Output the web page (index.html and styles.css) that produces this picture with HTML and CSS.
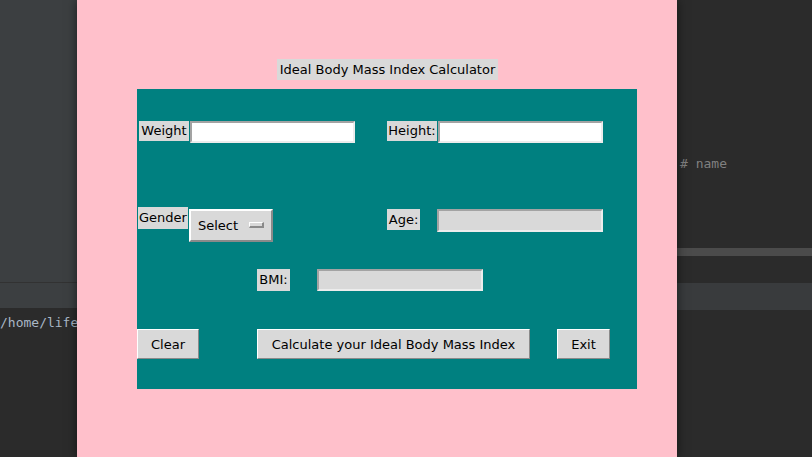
FILE: index.html
```html
<!DOCTYPE html>
<html>
<head>
<meta charset="utf-8">
<link rel="stylesheet" href="styles.css">
</head>
<body>
<div class="desk">
  <div class="pane pane-left">
    <div class="lp-top"></div>
    <div class="lp-tab"></div>
    <div class="lp-term"><span class="term-text">/home/life</span></div>
  </div>
  <div class="window">
    <div class="title-row"><span class="lbl title">Ideal Body Mass Index Calculator</span></div>
    <div class="frame">
      <div class="row row1">
        <span class="lbl w50 weight-lbl">Weight</span>
        <span class="entry white"></span>
        <span class="lbl w50 height-lbl">Height:</span>
        <span class="entry white"></span>
      </div>
      <div class="row row2">
        <span class="lbl w50 gender-lbl">Gender</span>
        <span class="option">Select<span class="indicator"></span></span>
        <span class="lbl w33 age-lbl">Age:</span>
        <span class="entry gray age-entry"></span>
      </div>
      <div class="row row3">
        <span class="lbl w33 bmi-lbl">BMI:</span>
        <span class="entry gray bmi-entry"></span>
      </div>
      <div class="row row4">
        <span class="btn btn-clear">Clear</span>
        <span class="btn btn-calc">Calculate your Ideal Body Mass Index</span>
        <span class="btn btn-exit">Exit</span>
      </div>
    </div>
  </div>
  <div class="pane pane-right">
    <div class="rp-top"><span class="comment"># name</span></div>
    <div class="rp-bar"></div>
    <div class="rp-gap"></div>
    <div class="rp-tab"></div>
    <div class="rp-rest"></div>
  </div>
</div>
</body>
</html>
```
FILE: styles.css
```css
html, body {
  margin: 0;
  padding: 0;
  width: 812px;
  height: 457px;
  overflow: hidden;
  background: #2b2b2b;
}
.desk {
  display: flex;
  width: 812px;
  height: 457px;
}
.pane {
  display: flex;
  flex-direction: column;
  overflow: hidden;
}
.pane-left {
  width: 77px;
  flex: none;
}
.lp-top {
  height: 282px;
  background: #3c3f41;
  border-bottom: 1px solid #323232;
}
.lp-tab {
  height: 25px;
  background: #3c3f41;
}
.lp-term {
  flex: 1;
  background: #2b2b2b;
  padding-top: 7px;
}
.term-text {
  display: block;
  white-space: nowrap;
  margin-left: 0;
  font-family: "DejaVu Sans Mono", monospace;
  font-size: 13px;
  line-height: 16px;
  color: #a9b7c6;
}
.pane-right {
  flex: 1;
}
.rp-top {
  height: 248px;
  background: #2b2b2b;
  padding-top: 156px;
  box-sizing: border-box;
}
.comment {
  display: block;
  margin-left: 3px;
  font-family: "DejaVu Sans Mono", monospace;
  font-size: 13px;
  line-height: 16px;
  color: #808080;
}
.rp-bar {
  height: 8px;
  background: #4b4b4b;
}
.rp-gap {
  height: 27px;
  background: #2b2b2b;
}
.rp-tab {
  height: 27px;
  background: #393b3d;
}
.rp-rest {
  flex: 1;
  background: #2b2b2b;
}
.window {
  width: 600px;
  flex: none;
  background: #ffc0cb;
  position: relative;
  z-index: 2;
  box-shadow: 0 0 10px rgba(0,0,0,0.55);
  padding-top: 59px;
  box-sizing: border-box;
  font-family: "DejaVu Sans", sans-serif;
  font-size: 13px;
  color: #000;
}
.title-row {
  display: flex;
  padding-left: 200px;
}
.lbl {
  display: block;
  background: #d9d9d9;
  height: 21px;
  line-height: 21px;
  text-align: center;
  white-space: nowrap;
  box-sizing: border-box;
}
.title {
  width: 221px;
}
.frame {
  margin-top: 9px;
  margin-left: 60px;
  width: 500px;
  height: 300px;
  background: #008080;
  display: flex;
  flex-direction: column;
}
.row {
  display: flex;
  align-items: flex-start;
}
.row1 { margin-top: 32px; }
.row2 { margin-top: 66px; }
.row3 { margin-top: 27px; }
.row4 { margin-top: 38px; }
.w50 { width: 50px; }
.w33 { width: 33px; }
.weight-lbl { margin-left: 2px; margin-right: 1px; height: 20px; line-height: 20px; }
.height-lbl { margin-left: 32px; margin-right: 1px; height: 20px; line-height: 20px; }
.entry {
  display: block;
  width: 165px;
  height: 22px;
  box-sizing: border-box;
  border-style: solid;
  border-width: 2px;
  border-color: #a3a3a3 #ececec #ececec #a3a3a3;
}
.white { background: #fff; }
.gray { background: #d9d9d9; }
.gender-lbl { margin-left: 1px; margin-top: -2px; height: 22px; line-height: 22px; }
.option {
  display: flex;
  align-items: center;
  width: 84px;
  height: 33px;
  box-sizing: border-box;
  margin-left: 1px;
  padding-left: 7px;
  padding-bottom: 1px;
  background: #d9d9d9;
  border-style: solid;
  border-width: 2px;
  border-color: #ffffff #8a8a8a #8a8a8a #ffffff;
  position: relative;
}
.indicator {
  position: absolute;
  left: 58px;
  top: 11px;
  width: 15px;
  height: 6px;
  box-sizing: border-box;
  background: #d9d9d9;
  border-style: solid;
  border-width: 1px 2px 2px 1px;
  border-color: #ffffff #8a8a8a #8a8a8a #ffffff;
}
.age-lbl { margin-left: 114px; }
.age-entry { margin-left: 17px; width: 166px; height: 23px; }
.bmi-lbl { margin-left: 120px; height: 22px; line-height: 22px; }
.bmi-entry { margin-left: 27px; width: 166px; height: 22px; }
.btn {
  display: flex;
  align-items: center;
  justify-content: center;
  height: 30px;
  box-sizing: border-box;
  background: #d9d9d9;
  border-style: solid;
  border-width: 1px;
  border-color: #ffffff #8a8a8a #8a8a8a #ffffff;
  white-space: nowrap;
}
.btn-clear { width: 62px; margin-left: 0; }
.btn-calc { width: 273px; margin-left: 58px; }
.btn-exit { width: 53px; margin-left: 27px; }
```
